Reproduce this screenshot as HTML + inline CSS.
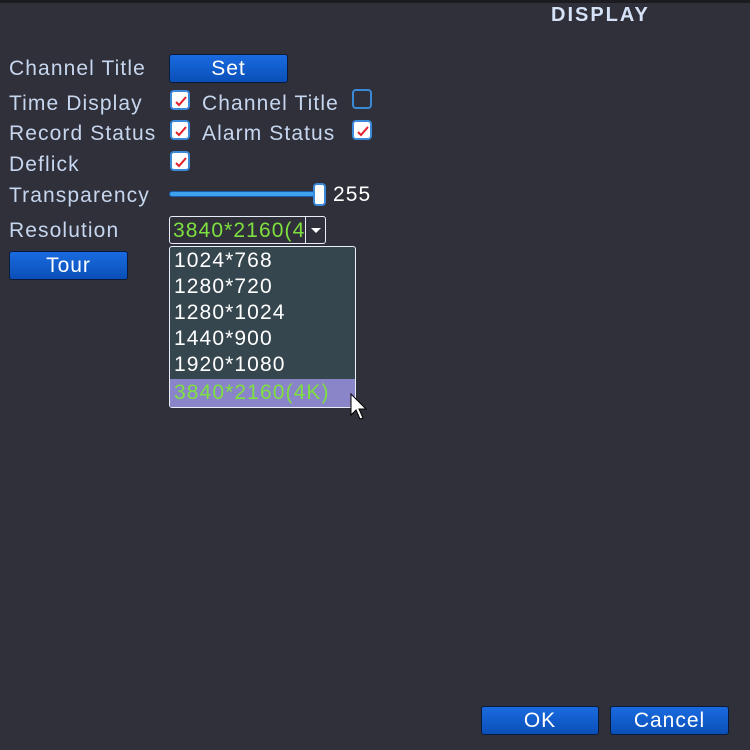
<!DOCTYPE html>
<html><head><meta charset="utf-8"><style>
*{margin:0;padding:0;box-sizing:border-box}
body{width:750px;height:750px;background:#2f3039;position:relative;overflow:hidden;font-family:"Liberation Sans",sans-serif;}
.t{position:absolute;color:#c7d6ef;font-size:21px;line-height:1;white-space:nowrap;letter-spacing:1.1px}
.btn{position:absolute;background:linear-gradient(#1a6be0,#0a4fb8);border:1px solid #0a1a3a;border-radius:3px;color:#fff;font-size:21px;text-align:center;line-height:27px;letter-spacing:1px}
.cb{position:absolute;width:20px;height:20px;background:#fff;border:2px solid #3a8ad8;border-radius:4px}
.cb svg{position:absolute;left:2px;top:2px}
.cbe{position:absolute;width:20px;height:20px;border:2px solid #3a8ad8;border-radius:4px}
.it{position:absolute;left:4px;color:#fff;font-size:21px;line-height:26px;width:182px;letter-spacing:1.1px;white-space:nowrap}
</style></head><body>
<div style="position:absolute;left:0;top:0;width:750px;height:3px;background:#1b1b20"></div>
<div class="t" style="left:551px;top:5px;font-size:20px;color:#d6e2f8;font-weight:bold;letter-spacing:2px">DISPLAY</div>

<div class="t" style="left:9px;top:58px">Channel Title</div>
<div class="btn" style="left:169px;top:54px;width:119px;height:29px">Set</div>

<div class="t" style="left:9px;top:93px">Time Display</div>
<div class="cb" style="left:170px;top:90px"><svg width="14" height="14"><path d="M2 8 L5 11 L12 3" stroke="#e0202a" stroke-width="2" fill="none"/></svg></div>
<div class="t" style="left:202px;top:93px">Channel Title</div>
<div class="cbe" style="left:352px;top:89px"></div>

<div class="t" style="left:9px;top:123px">Record Status</div>
<div class="cb" style="left:170px;top:120px"><svg width="14" height="14"><path d="M2 8 L5 11 L12 3" stroke="#e0202a" stroke-width="2" fill="none"/></svg></div>
<div class="t" style="left:202px;top:123px">Alarm Status</div>
<div class="cb" style="left:352px;top:120px"><svg width="14" height="14"><path d="M2 8 L5 11 L12 3" stroke="#e0202a" stroke-width="2" fill="none"/></svg></div>

<div class="t" style="left:9px;top:154px">Deflick</div>
<div class="cb" style="left:170px;top:151px"><svg width="14" height="14"><path d="M2 8 L5 11 L12 3" stroke="#e0202a" stroke-width="2" fill="none"/></svg></div>

<div class="t" style="left:9px;top:185px">Transparency</div>
<div style="position:absolute;left:169px;top:191px;width:148px;height:6px;background:#3fa0f0;border-radius:3px;border:1px solid #1a5aa8"></div>
<div style="position:absolute;left:313px;top:183px;width:13px;height:23px;background:#fff;border:2px solid #3a8ad8;border-radius:4px"></div>
<div class="t" style="left:333px;top:184px;color:#fff">255</div>

<div class="t" style="left:9px;top:220px">Resolution</div>
<div style="position:absolute;left:169px;top:216px;width:157px;height:28px;border:1px solid #e8eef8;border-radius:3px;overflow:hidden">
 <div style="position:absolute;left:3px;top:3px;color:#7ee040;font-size:21px;line-height:22px;width:132px;overflow:hidden;white-space:nowrap;letter-spacing:1.1px">3840*2160(4K)</div>
 <div style="position:absolute;left:135px;top:0;width:1px;height:28px;background:#e8eef8"></div>
 <svg style="position:absolute;left:140px;top:10px" width="12" height="7"><path d="M1 1 L11 1 L6 6Z" fill="#fff"/></svg>
</div>

<div class="btn" style="left:9px;top:251px;width:119px;height:29px">Tour</div>

<div style="position:absolute;left:169px;top:246px;width:187px;height:162px;background:#36464f;border:1px solid #e8eef8;border-radius:3px;overflow:hidden">
 <div class="it" style="top:1px">1024*768</div>
 <div class="it" style="top:27px">1280*720</div>
 <div class="it" style="top:53px">1280*1024</div>
 <div class="it" style="top:79px">1440*900</div>
 <div class="it" style="top:105px">1920*1080</div>
 <div style="position:absolute;left:0;top:132px;width:187px;height:30px;background:#8a85c8"></div>
 <div class="it" style="top:133px;color:#7ee040">3840*2160(4K)</div>
</div>
<svg style="position:absolute;left:350px;top:393px" width="18" height="30"><path d="M1 1 L1 22 L6 17 L10 26 L13 25 L9 16 L16 16Z" fill="#fff" stroke="#000" stroke-width="1"/></svg>

<div class="btn" style="left:481px;top:706px;width:118px;height:29px">OK</div>
<div class="btn" style="left:610px;top:706px;width:119px;height:29px">Cancel</div>
</body></html>
